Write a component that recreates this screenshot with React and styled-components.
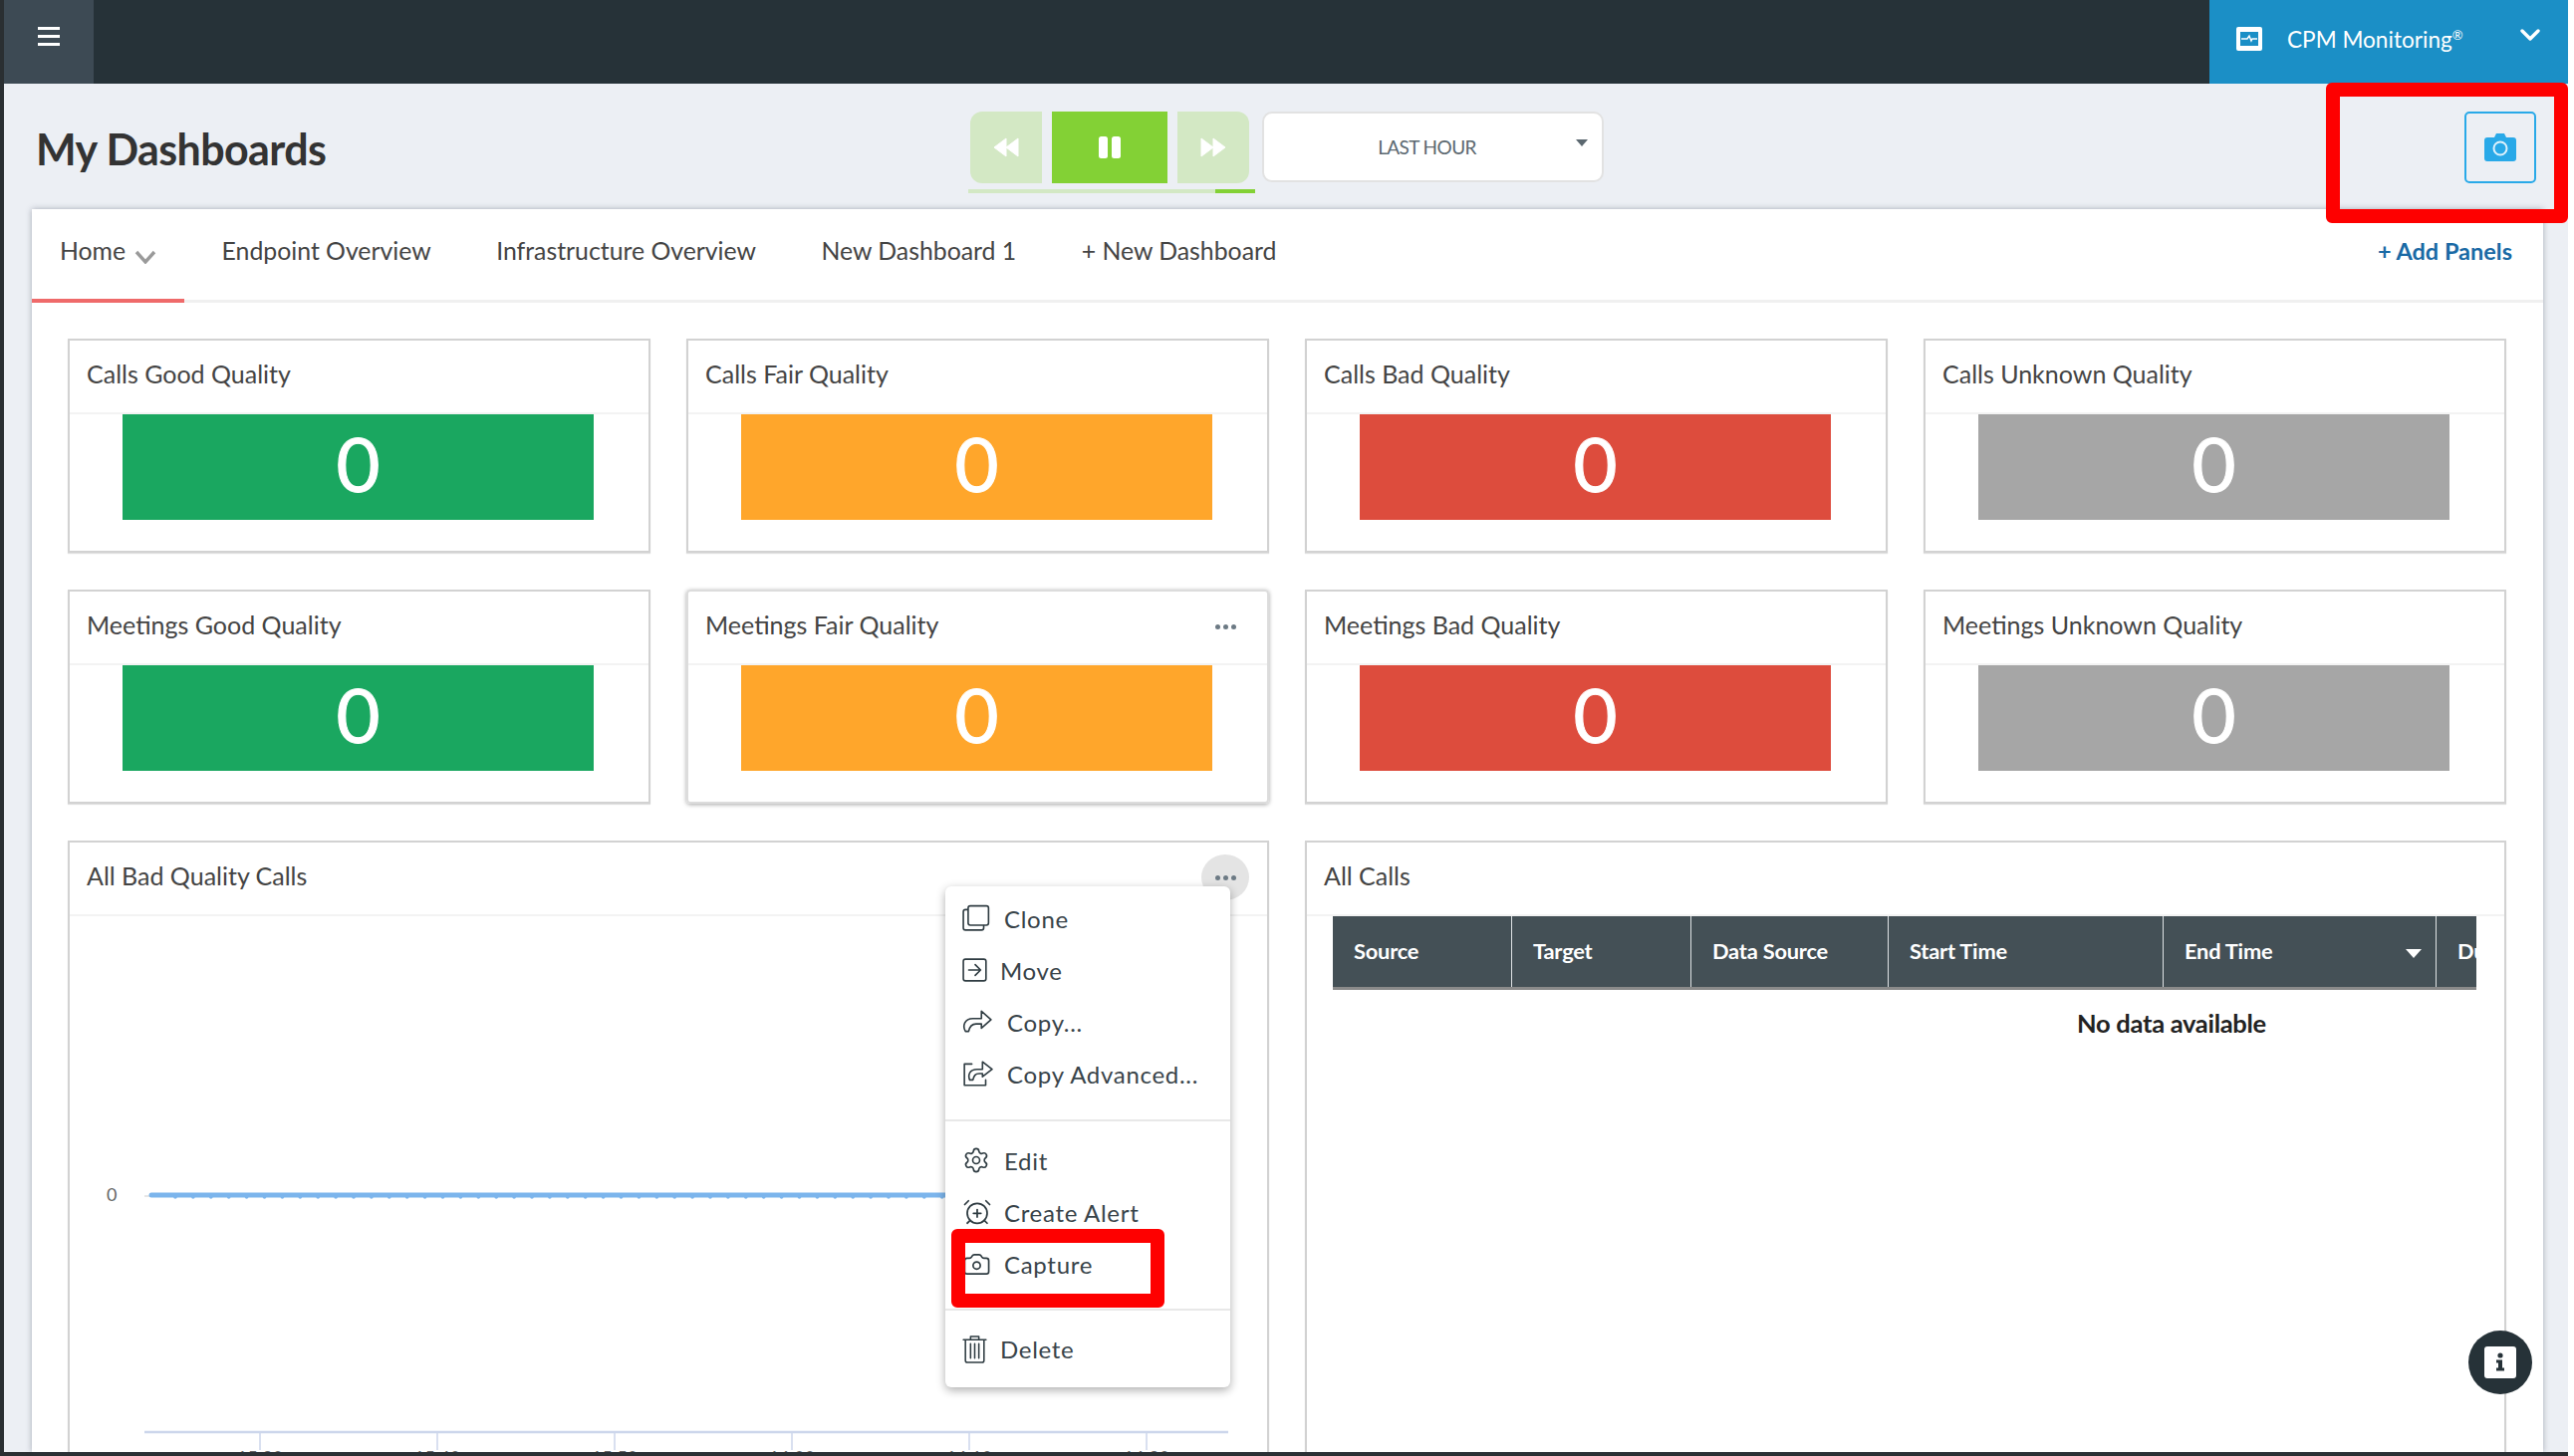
import React from "react";
import styled, { createGlobalStyle } from "styled-components";
import { Settings, AlarmClockPlus, Camera } from "lucide-react";

const GlobalStyle = createGlobalStyle`
  html, body {
    margin: 0;
    padding: 0;
    height: 100%;
    overflow: hidden;
    background: #fff;
    font-family: Lato, "Open Sans", sans-serif;
  }
  * { box-sizing: border-box; }
`;

const Page = styled.div`
  position: relative;
  width: 2578px;
  height: 1462px;
  padding: 0 0 4px 4px;
  display: flex;
  flex-direction: column;
  overflow: hidden;
  background: #2a2f32;
`;

const TopBar = styled.div`
  height: 84px;
  flex: none;
  display: flex;
  justify-content: space-between;
  background: #263238;
`;

const MenuButton = styled.div`
  width: 90px;
  display: flex;
  flex-direction: column;
  gap: 5px;
  padding: 27px 0 0 34px;
  background: #3d4a54;
`;

const MenuBar = styled.span`
  width: 22px;
  height: 3px;
  background: #fff;
`;

const ProductSwitch = styled.div`
  width: 360px;
  display: flex;
  align-items: flex-start;
  padding: 27px 0 0 27px;
  color: #fff;
  background: #1b8fc6;
  font-size: 22.6px;
  line-height: 26px;
`;

const ProductName = styled.span`
  margin-left: 25px;
  sup {
    font-size: 13px;
    line-height: 0;
    vertical-align: 8px;
  }
`;

const ProductChevron = styled.svg`
  margin: 2px 0 0 57px;
`;

const Content = styled.div`
  flex: 1;
  min-height: 0;
  display: flex;
  flex-direction: column;
  background: #eceff4;
`;

const HeaderRow = styled.div`
  height: 126px;
  flex: none;
  display: flex;
  align-items: flex-start;
  padding: 28px 32px 0 32px;
`;

const Title = styled.h1`
  width: 936px;
  margin: 0;
  padding-top: 13px;
  color: #333;
  font-size: 43px;
  line-height: 50px;
  font-weight: 700;
  letter-spacing: -0.6px;
`;

const Transport = styled.div`
  width: 288px;
  display: flex;
  flex-direction: column;
  gap: 6px;
`;

const TransportButtons = styled.div`
  display: flex;
  gap: 10px;
  padding-left: 2px;
`;

const TransportButton = styled.div`
  width: ${(p) => (p.$main ? "116px" : "72px")};
  height: 72px;
  display: flex;
  align-items: center;
  justify-content: center;
  background: ${(p) => (p.$main ? "#83d135" : "#d3e8c4")};
  border-radius: ${(p) => p.$radius || "0"};
`;

const Progress = styled.div`
  height: 4px;
  display: flex;
  justify-content: flex-end;
  background: #d3e8c4;
`;

const ProgressFill = styled.div`
  width: 40px;
  background: #83d135;
`;

const RangeSelect = styled.div`
  position: relative;
  width: 343px;
  height: 71px;
  margin-left: 7px;
  display: flex;
  align-items: center;
  justify-content: center;
  padding-right: 12px;
  color: #5b6870;
  background: #fff;
  border: 2px solid #e2e2e2;
  border-radius: 10px;
  font-size: 19px;
  letter-spacing: -0.6px;
`;

const RangeCaret = styled.span`
  position: absolute;
  top: 26px;
  right: 14px;
  border-left: 6px solid transparent;
  border-right: 6px solid transparent;
  border-top: 7px solid #5b6870;
`;

const CaptureButton = styled.div`
  width: 72px;
  height: 72px;
  margin-left: auto;
  display: flex;
  align-items: center;
  justify-content: center;
  border: 2px solid #29a9e8;
  border-radius: 5px;
`;

const Panel = styled.div`
  width: 2521px;
  margin-left: 28px;
  flex: 1;
  min-height: 0;
  overflow: hidden;
  display: flex;
  flex-direction: column;
  background: #fff;
  box-shadow: 0 0 6px rgba(60, 70, 90, 0.4);
`;

const Tabs = styled.div`
  height: 94px;
  flex: none;
  display: flex;
  gap: 9.5px;
  border-bottom: 3px solid #f0f0f0;
`;

const Tab = styled.div`
  height: 94px;
  display: flex;
  align-items: flex-start;
  padding: 26px 28px 0 28px;
  color: #444;
  font-size: 24.8px;
  line-height: 32px;
  border-bottom: 4px solid ${(p) => (p.$active ? "#ef6a6a" : "transparent")};
`;

const TabChevron = styled.svg`
  margin: 15px 0 0 9px;
`;

const AddPanels = styled.div`
  margin-left: auto;
  padding: 26px 31px 0 0;
  color: #1a6aa5;
  font-size: 23.5px;
  line-height: 32px;
  font-weight: 700;
`;

const Grid = styled.div`
  display: grid;
  grid-template-columns: repeat(4, 585px);
  grid-auto-rows: 215px;
  gap: 37px 36px;
  padding: 36px 0 0 36px;
`;

const Card = styled.div`
  position: relative;
  border: 2px solid ${(p) => (p.$hovered ? "#dcdcdc" : "#d2d2d2")};
  border-radius: ${(p) => (p.$hovered ? "4px" : "0")};
  box-shadow: ${(p) => (p.$hovered ? "0 1px 4px rgba(0,0,0,0.35)" : "0 1px 1px rgba(0,0,0,0.12)")};
`;

const WideCard = styled(Card)`
  grid-column: span 2;
  height: 760px;
`;

const CardHeader = styled.div`
  height: 74px;
  display: flex;
  justify-content: space-between;
  padding: 17px 18px 0 17px;
  border-bottom: 2px solid #f3f3f3;
  color: #444;
  font-size: 25px;
  line-height: 32px;
`;

const Kebab = styled.div`
  width: 48px;
  height: 46px;
  margin-top: -5px;
  display: flex;
  align-items: center;
  justify-content: center;
  gap: 3px;
  border-radius: 50%;
  background: ${(p) => (p.$active ? "#e4e4e4" : "transparent")};
`;

const KebabDot = styled.span`
  width: 5px;
  height: 5px;
  border-radius: 50%;
  background: #6c7a84;
`;

const Metric = styled.div`
  width: 473px;
  height: 106px;
  margin-left: 53px;
  padding-bottom: 8px;
  display: flex;
  align-items: center;
  justify-content: center;
  color: #fff;
  background: ${(p) => p.$color};
  font-size: 76px;
  line-height: 98px;
  -webkit-text-stroke: 1px #fff;
`;

const ChartArea = styled.svg`
  display: block;
`;

const TableWrap = styled.div`
  width: 1148px;
  margin-left: 26px;
  overflow: hidden;
`;

const TableInner = styled.div`
  width: 1684px;
`;

const TableHead = styled.div`
  display: grid;
  grid-template-columns: 180px 180px 198px 276px 274px 1fr;
  height: 74px;
  background: #445056;
  border-bottom: 3px solid #8a8a8a;
`;

const TableHeadCell = styled.div`
  position: relative;
  display: flex;
  align-items: center;
  padding: 0 0 2px 21px;
  color: #fff;
  font-size: 21.8px;
  font-weight: 700;
  letter-spacing: -0.2px;
  border-right: 1.5px solid #dfe3e5;
`;

const SortCaret = styled.span`
  position: absolute;
  right: 14px;
  top: 33px;
  border-left: 8px solid transparent;
  border-right: 8px solid transparent;
  border-top: 9px solid #fff;
`;

const NoData = styled.div`
  padding-top: 18px;
  color: #222;
  text-align: center;
  font-size: 25.5px;
  line-height: 30px;
  font-weight: 700;
  letter-spacing: -0.3px;
`;

const ContextMenu = styled.div`
  position: absolute;
  left: 879px;
  top: 44px;
  width: 286px;
  height: 503px;
  padding: 6px 0 0 17px;
  background: #fff;
  border-radius: 6px;
  box-shadow: 0 3px 10px rgba(0, 0, 0, 0.32);
`;

const MenuItem = styled.div`
  height: 52px;
  display: flex;
  align-items: center;
  color: #39444a;
  font-size: 24px;
  letter-spacing: 0.7px;
`;

const MenuIcon = styled.span`
  width: 26px;
  height: 30px;
  flex: none;
  display: flex;
  align-items: center;
  justify-content: flex-start;
  color: #2f3c42;
  margin-right: ${(p) => p.$gap}px;

  svg {
    flex: none;
  }
`;

const MenuDivider = styled.div`
  height: 2px;
  margin: ${(p) => p.$top}px 0 ${(p) => p.$bottom}px -17px;
  background: #e8e8e8;
`;

const Highlight = styled.div`
  position: absolute;
  border: 14px solid #fe0000;
  border-radius: 6px;
  pointer-events: none;
`;

const CameraHighlight = styled(Highlight)`
  left: 2335px;
  top: 83px;
  width: 243px;
  height: 141px;
`;

const CaptureHighlight = styled(Highlight)`
  left: 955px;
  top: 1234px;
  width: 214px;
  height: 79px;
`;

const InfoFab = styled.div`
  position: absolute;
  left: 2478px;
  top: 1336px;
  width: 64px;
  height: 64px;
  display: flex;
  align-items: center;
  justify-content: center;
  border-radius: 50%;
  background: #263238;
`;

const metrics = [
  ["Calls Good Quality", "#1aa760"],
  ["Calls Fair Quality", "#ffa62b"],
  ["Calls Bad Quality", "#dd4c3d"],
  ["Calls Unknown Quality", "#a6a6a6"],
  ["Meetings Good Quality", "#1aa760"],
  ["Meetings Fair Quality", "#ffa62b"],
  ["Meetings Bad Quality", "#dd4c3d"],
  ["Meetings Unknown Quality", "#a6a6a6"],
];

const tabs = ["Endpoint Overview", "Infrastructure Overview", "New Dashboard 1", "+ New Dashboard"];
const columns = ["Source", "Target", "Data Source", "Start Time", "End Time", "Duration"];
const tickTimes = ["15:30", "15:40", "15:50", "16:00", "16:10", "16:20"];

const lineStyle = { fill: "none", stroke: "currentColor", strokeWidth: 1.5, strokeLinejoin: "round", strokeLinecap: "round" };

const CloneIcon = () => (
  <svg width="28" height="28" viewBox="0 0 26 26" {...lineStyle}>
    <rect x="5.5" y="1.5" width="19" height="18" rx="2" />
    <path d="M5 5H3a2 2 0 0 0-2 2v15a2 2 0 0 0 2 2h15a2 2 0 0 0 2-2v-2" />
  </svg>
);

const MoveIcon = () => (
  <svg width="26" height="26" viewBox="0 0 24 24" {...lineStyle}>
    <rect x="1" y="2" width="21" height="20" rx="2" />
    <path d="M6 12h11M12 7l5 5-5 5" />
  </svg>
);

const ShareArrow = () => (
  <svg width="31" height="26" viewBox="0 0 29 24" {...lineStyle}>
    <path d="M18 2l9 8-9 8v-4h-5c-4 0-6 2-7 7H3c-3-5-1-12 7-12h8z" />
  </svg>
);

const ShareBoxIcon = () => (
  <svg width="31" height="26" viewBox="0 0 29 24" {...lineStyle}>
    <path d="M9 3H2v20h20v-5" />
    <path d="M19 1l9 7-9 7v-3h-3c-4 0-5 2-6 6H7c-2-5 0-10 7-10h5z" />
  </svg>
);

const TrashIcon = () => (
  <svg width="25" height="29" viewBox="0 0 24 28" {...lineStyle}>
    <path d="M1 5h22M8 5V2h8v3M3 5v20a2 2 0 0 0 2 2h14a2 2 0 0 0 2-2V5M8 9v14M12 9v14M16 9v14" />
  </svg>
);

const menuTop = [
  ["Clone", <CloneIcon key="i" />, 16],
  ["Move", <MoveIcon key="i" />, 12],
  ["Copy...", <ShareArrow key="i" />, 19],
  ["Copy Advanced...", <ShareBoxIcon key="i" />, 19],
];

const menuMiddle = [
  ["Edit", <Settings key="i" size={28} strokeWidth={1.4} />, 16],
  ["Create Alert", <AlarmClockPlus key="i" size={30} strokeWidth={1.4} />, 16],
  ["Capture", <Camera key="i" size={29} strokeWidth={1.4} />, 16],
];

const Row = ({ item }) => (
  <MenuItem>
    <MenuIcon $gap={item[2]}>{item[1]}</MenuIcon>
    {item[0]}
  </MenuItem>
);

const KebabButton = ({ active }) => (
  <Kebab $active={active}>
    <KebabDot />
    <KebabDot />
    <KebabDot />
  </Kebab>
);

// flat series sitting on zero, one marker every 18px
const ChartPlot = () => {
  const dots = [];
  for (let x = 24; x < 1000; x += 17.9) dots.push(x);
  return (
    <ChartArea width="1202" height="560" viewBox="0 0 1202 560">
      <line x1="75" x2="1100" y1="281" y2="281" stroke="#e6e6e6" strokeWidth="2" />
      <line x1="82" x2="1100" y1="280" y2="280" stroke="#7cb5ec" strokeWidth="5" strokeLinecap="round" />
      {dots.map((x) => (
        <circle key={x} cx={82 + x} cy="282" r="1.8" fill="#7cb5ec" />
      ))}
      <text x="37" y="286" fontFamily="Lato, sans-serif" fontSize="18" fill="#666">0</text>
      <line x1="75" x2="1163" y1="518" y2="518" stroke="#ccd6eb" strokeWidth="2.5" />
      {tickTimes.map((t, i) => (
        <g key={t}>
          <line x1={191 + i * 178} x2={191 + i * 178} y1="518" y2="536" stroke="#ccd6eb" strokeWidth="1.5" />
          <text x={191 + i * 178} y="550" textAnchor="middle" fontFamily="Lato, sans-serif" fontSize="18" fill="#666">{t}</text>
        </g>
      ))}
    </ChartArea>
  );
};

const App = () => (
  <Page>
    <GlobalStyle />
    <TopBar>
      <MenuButton>
        <MenuBar />
        <MenuBar />
        <MenuBar />
      </MenuButton>
      <ProductSwitch>
        <svg width="26" height="24" viewBox="0 0 26 24">
          <rect width="26" height="24" rx="2" fill="#fff" />
          <rect x="4" y="5" width="18" height="14" fill="#1b8fc6" />
          <path d="M5 12h6l2-3 2 5 1-2h5" fill="none" stroke="#fff" strokeWidth="1.4" />
        </svg>
        <ProductName>CPM Monitoring<sup>®</sup></ProductName>
        <ProductChevron width="20" height="13" viewBox="0 0 20 13">
          <path d="M2 2l8 8 8-8" fill="none" stroke="#fff" strokeWidth="3.4" strokeLinecap="round" strokeLinejoin="round" />
        </ProductChevron>
      </ProductSwitch>
    </TopBar>

    <Content>
      <HeaderRow>
        <Title>My Dashboards</Title>
        <Transport>
          <TransportButtons>
            <TransportButton $radius="12px 0 0 12px">
              <svg width="26" height="20" viewBox="0 0 26 20" fill="#fff">
                <path d="M13 1v18L1 10zM25 1v18L13 10z" stroke="#fff" strokeLinejoin="round" />
              </svg>
            </TransportButton>
            <TransportButton $main>
              <svg width="24" height="24" viewBox="0 0 24 24" fill="#fff">
                <rect x="1" y="1" width="9" height="22" rx="2.5" />
                <rect x="14" y="1" width="9" height="22" rx="2.5" />
              </svg>
            </TransportButton>
            <TransportButton $radius="0 12px 12px 0">
              <svg width="26" height="20" viewBox="0 0 26 20" fill="#fff">
                <path d="M1 1v18l12-9zM13 1v18l12-9z" stroke="#fff" strokeLinejoin="round" />
              </svg>
            </TransportButton>
          </TransportButtons>
          <Progress>
            <ProgressFill />
          </Progress>
        </Transport>
        <RangeSelect>
          LAST HOUR
          <RangeCaret />
        </RangeSelect>
        <CaptureButton>
          <svg width="32" height="28" viewBox="0 0 32 28">
            <path d="M10 4l2-4h8l2 4h7a3 3 0 0 1 3 3v18a3 3 0 0 1-3 3H3a3 3 0 0 1-3-3V7a3 3 0 0 1 3-3z" fill="#29a9e8" />
            <circle cx="16" cy="15" r="6.5" fill="none" stroke="#dff2fc" strokeWidth="2" />
          </svg>
        </CaptureButton>
      </HeaderRow>

      <Panel>
        <Tabs>
          <Tab $active>
            Home
            <TabChevron width="22" height="14" viewBox="0 0 22 14">
              <path d="M2 2l9 10 9-10" fill="none" stroke="#9a9a9a" strokeWidth="3.4" />
            </TabChevron>
          </Tab>
          {tabs.map((t) => (
            <Tab key={t}>{t}</Tab>
          ))}
          <AddPanels>+ Add Panels</AddPanels>
        </Tabs>

        <Grid>
          {metrics.map(([label, color], i) => (
            <Card key={label} $hovered={i === 5}>
              <CardHeader>
                {label}
                {i === 5 && <KebabButton />}
              </CardHeader>
              <Metric $color={color}>0</Metric>
            </Card>
          ))}
          <WideCard>
            <CardHeader>
              All Bad Quality Calls
              <KebabButton active />
            </CardHeader>
            <ChartPlot />
            <ContextMenu>
              {menuTop.map((item) => (
                <Row key={item[0]} item={item} />
              ))}
              <MenuDivider $top={20} $bottom={13} />
              {menuMiddle.map((item) => (
                <Row key={item[0]} item={item} />
              ))}
              <MenuDivider $top={19} $bottom={12} />
              <Row item={["Delete", <TrashIcon key="i" />, 12]} />
            </ContextMenu>
          </WideCard>
          <WideCard>
            <CardHeader>All Calls</CardHeader>
            <TableWrap>
              <TableInner>
                <TableHead>
                  {columns.map((c) => (
                    <TableHeadCell key={c}>
                      {c}
                      {c === "End Time" && <SortCaret />}
                    </TableHeadCell>
                  ))}
                </TableHead>
                <NoData>No data available</NoData>
              </TableInner>
            </TableWrap>
          </WideCard>
        </Grid>
      </Panel>
    </Content>

    <CameraHighlight />
    <CaptureHighlight />
    <InfoFab>
      <svg width="32" height="32" viewBox="0 0 32 32">
        <rect width="32" height="32" rx="3" fill="#fff" />
        <circle cx="16" cy="9" r="2.6" fill="#263238" />
        <path d="M12 13.5h6v8h2v3h-8v-3h2v-5h-2z" fill="#263238" />
      </svg>
    </InfoFab>
  </Page>
);

export default App;
